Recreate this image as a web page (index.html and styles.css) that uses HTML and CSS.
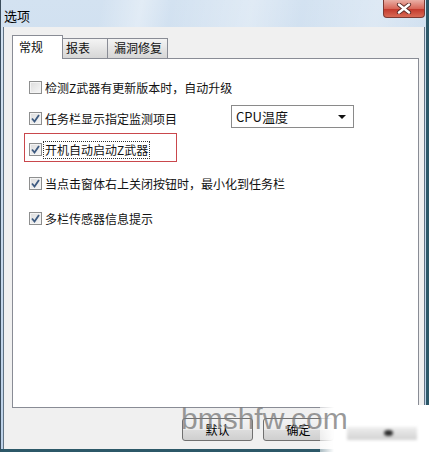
FILE: index.html
```html
<!DOCTYPE html>
<html lang="zh-CN">
<head>
    <meta charset="UTF-8">
    <title>选项</title>
    <link rel="stylesheet" href="styles.css">
</head>
<body>
    <div class="window">
        <div class="titlebar">
            <span class="title">选项</span>
            <div class="close">
                <svg width="16" height="11" viewBox="0 0 16 11">
                    <path d="M3 1.5 L13 9.5 M13 1.5 L3 9.5" stroke="#5a2a26" stroke-width="4.2" stroke-linecap="round"/>
                    <path d="M3 1.5 L13 9.5 M13 1.5 L3 9.5" stroke="#fff" stroke-width="2.4" stroke-linecap="round"/>
                </svg>
            </div>
        </div>
        <div class="client">
            <div class="tabs">
                <div class="tab active">常规</div>
                <div class="tab">报表</div>
                <div class="tab wide">漏洞修复</div>
            </div>
            <div class="panel">
                <div class="opt row1">
                    <span class="check"></span>
                    <span class="label">检测Z武器有更新版本时，自动升级</span>
                </div>
                <div class="opt row2">
                    <span class="check on"><svg width="9" height="9" viewBox="0 0 9 9"><path d="M1 4.5 L3.5 7.5 L8 1" fill="none" stroke="#3d5a80" stroke-width="1.8"/></svg></span>
                    <span class="label">任务栏显示指定监测项目</span>
                    <div class="select">
                        <span>CPU温度</span>
                        <span class="arrow"></span>
                    </div>
                </div>
                <div class="highlight">
                    <div class="opt">
                        <span class="check on"><svg width="9" height="9" viewBox="0 0 9 9"><path d="M1 4.5 L3.5 7.5 L8 1" fill="none" stroke="#3d5a80" stroke-width="1.8"/></svg></span>
                        <span class="label focus">开机自动启动Z武器</span>
                    </div>
                </div>
                <div class="opt row4">
                    <span class="check on"><svg width="9" height="9" viewBox="0 0 9 9"><path d="M1 4.5 L3.5 7.5 L8 1" fill="none" stroke="#3d5a80" stroke-width="1.8"/></svg></span>
                    <span class="label">当点击窗体右上关闭按钮时，最小化到任务栏</span>
                </div>
                <div class="opt">
                    <span class="check on"><svg width="9" height="9" viewBox="0 0 9 9"><path d="M1 4.5 L3.5 7.5 L8 1" fill="none" stroke="#3d5a80" stroke-width="1.8"/></svg></span>
                    <span class="label">多栏传感器信息提示</span>
                </div>
            </div>
            <div class="buttons">
                <button class="btn">默认</button>
                <button class="btn">确定</button>
                <button class="btn"></button>
            </div>
        </div>
        <div class="patch">
            <div class="smudge"><span class="blob"></span></div>
        </div>
        <div class="watermark">bmshfw.com</div>
    </div>
</body>
</html>
```

FILE: styles.css
```css
* {
    margin: 0;
    padding: 0;
    box-sizing: border-box;
}
body {
    width: 429px;
    height: 452px;
    overflow: hidden;
    font-family: "Noto Sans CJK SC", "Noto Sans", sans-serif;
    font-size: 12px;
    color: #111;
}
.window {
    position: relative;
    width: 429px;
    height: 452px;
    display: flex;
    flex-direction: column;
    border-left: 1px solid #3a4c5c;
    border-right: 3px solid #2c5868;
    border-bottom: 3px solid #2c5868;
    background:
        linear-gradient(100deg, rgba(255,255,255,0) 20%, rgba(255,255,255,.35) 28%, rgba(255,255,255,0) 34%, rgba(255,255,255,.3) 50%, rgba(255,255,255,0) 60%, rgba(255,255,255,.25) 75%, rgba(255,255,255,0) 85%),
        linear-gradient(#d3e2f1, #bcd1e8);
}
.titlebar {
    height: 27px;
    display: flex;
    align-items: flex-start;
    padding-left: 3px;
}
.title {
    font-size: 13px;
    line-height: 13px;
    margin-top: 9px;
    color: #000;
}
.close {
    margin-left: auto;
    margin-right: 1px;
    width: 42px;
    height: 18px;
    display: flex;
    align-items: center;
    justify-content: center;
    border: 1px solid #7c3a33;
    border-top: none;
    border-radius: 0 0 4px 4px;
    background: linear-gradient(#eab0a6, #d8685a 50%, #c33b2e 55%, #d96a55);
}
.client {
    flex: 1;
    margin: 0 1px 0 2px;
    border-left: 1px solid #627485;
    border-right: 1px solid #627485;
    background: #f0f0f0;
    padding: 8px 0 0 8px;
}
.tabs {
    display: flex;
    align-items: flex-end;
    height: 23px;
}
.tab {
    height: 20px;
    width: 45px;
    border: 1px solid #898c95;
    border-bottom: none;
    border-left: none;
    background: linear-gradient(#f4f4f4, #d6d6d6);
    padding-left: 3px;
    line-height: 18px;
    font-size: 12px;
}
.tab.wide {
    width: 60px;
    padding-left: 6px;
}
.tab.active {
    position: relative;
    z-index: 1;
    height: 24px;
    width: 51px;
    margin-bottom: -1px;
    border-left: 1px solid #898c95;
    background: #fff;
    padding-left: 6px;
    line-height: 22px;
}
.panel {
    width: 407px;
    height: 350px;
    border: 1px solid #898c95;
    background: #fff;
    padding: 22px 0 0 16px;
}
.opt {
    display: flex;
    align-items: center;
    height: 13px;
}
.row1 {
    margin-bottom: 18px;
}
.row2 {
    margin-bottom: 8px;
}
.row4 {
    margin-bottom: 22px;
}
.check {
    width: 13px;
    height: 13px;
    flex: none;
    border: 1px solid #8e8f8f;
    background: linear-gradient(135deg, #dcdcdc, #f7f7f7);
    box-shadow: inset 0 0 0 1px #f4f4f4;
    display: flex;
    align-items: center;
    justify-content: center;
}
.label {
    margin-left: 3px;
    line-height: 14px;
    white-space: nowrap;
}
.label.focus {
    outline: 1px dotted #333;
    outline-offset: 1px;
}
.select {
    align-self: flex-start;
    margin: -7px 0 0 54px;
    width: 123px;
    height: 23px;
    border: 1px solid #8a8a8a;
    background: #fff;
    display: flex;
    align-items: center;
    padding-left: 4px;
    font-size: 13px;
}
.arrow {
    margin-left: auto;
    margin-right: 7px;
    border-left: 4px solid transparent;
    border-right: 4px solid transparent;
    border-top: 4px solid #111;
}
.highlight {
    width: 153px;
    height: 29px;
    margin: 0 0 15px -5px;
    border: 1px solid #c9474c;
    padding: 9px 0 0 4px;
}
.buttons {
    display: flex;
    gap: 10px;
    padding: 10px 0 0 170px;
}
.btn {
    width: 71px;
    height: 23px;
    border: 1px solid #707070;
    border-radius: 3px;
    background: linear-gradient(#f3f3f3, #ebebeb 50%, #dddddd 51%, #cfcfcf);
    font-family: inherit;
    font-size: 12px;
    color: #000;
}
/* white corner block over the lower right */
.patch {
    position: absolute;
    left: 319px;
    top: 405px;
    width: 110px;
    height: 47px;
    background: linear-gradient(90deg, rgba(255,255,255,.6), #fff 14px);
}
.smudge {
    position: absolute;
    left: 27px;
    top: 22px;
    width: 70px;
    height: 13px;
    background: linear-gradient(#eeeeee, #d2d2d2);
    filter: blur(1.5px);
}
.blob {
    position: absolute;
    left: 37px;
    top: 3px;
    width: 9px;
    height: 6px;
    border-radius: 50%;
    background: #2a2a2a;
}
.watermark {
    position: absolute;
    left: 180px;
    top: 404px;
    font-family: "Liberation Sans", Arial, sans-serif;
    font-size: 30px;
    line-height: 30px;
    color: rgba(120,120,120,.75);
}
```
